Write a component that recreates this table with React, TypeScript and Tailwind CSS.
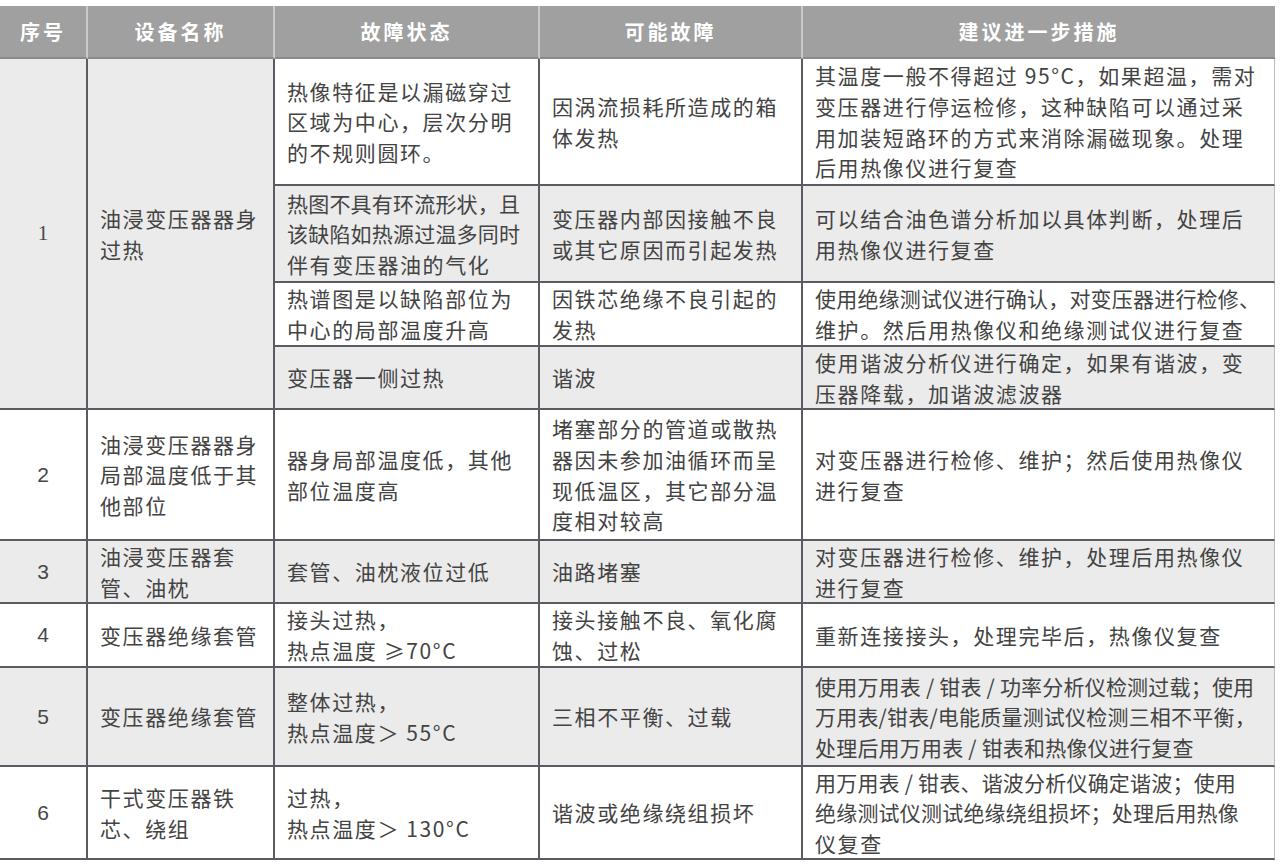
import React from "react";

type Cell = { lines: string[]; tight?: number[] };
type Row = { bg: string; cells: Cell[] };

const FONT = '"Noto Sans CJK SC", "Noto Sans", sans-serif';

const sub1: Row[] = [
  {
    bg: "bg-white",
    cells: [
      { lines: ["热像特征是以漏磁穿过", "区域为中心，层次分明", "的不规则圆环。"] },
      { lines: ["因涡流损耗所造成的箱", "体发热"] },
      {
        lines: [
          "其温度一般不得超过 95°C，如果超温，需对",
          "变压器进行停运检修，这种缺陷可以通过采",
          "用加装短路环的方式来消除漏磁现象。处理",
          "后用热像仪进行复查",
        ],
      },
    ],
  },
  {
    bg: "bg-[#ebebeb]",
    cells: [
      { lines: ["热图不具有环流形状，且", "该缺陷如热源过温多同时", "伴有变压器油的气化"], tight: [0, 1] },
      { lines: ["变压器内部因接触不良", "或其它原因而引起发热"] },
      { lines: ["可以结合油色谱分析加以具体判断，处理后", "用热像仪进行复查"] },
    ],
  },
  {
    bg: "bg-white",
    cells: [
      { lines: ["热谱图是以缺陷部位为", "中心的局部温度升高"] },
      { lines: ["因铁芯绝缘不良引起的", "发热"] },
      { lines: ["使用绝缘测试仪进行确认，对变压器进行检修、", "维护。然后用热像仪和绝缘测试仪进行复查"], tight: [0] },
    ],
  },
  {
    bg: "bg-[#ebebeb]",
    cells: [
      { lines: ["变压器一侧过热"] },
      { lines: ["谐波"] },
      { lines: ["使用谐波分析仪进行确定，如果有谐波，变", "压器降载，加谐波滤波器"] },
    ],
  },
];

const rows: { num: string; bg: string; cells: Cell[] }[] = [
  {
    num: "2",
    bg: "bg-white",
    cells: [
      { lines: ["油浸变压器器身", "局部温度低于其", "他部位"] },
      { lines: ["器身局部温度低，其他", "部位温度高"] },
      { lines: ["堵塞部分的管道或散热", "器因未参加油循环而呈", "现低温区，其它部分温", "度相对较高"] },
      { lines: ["对变压器进行检修、维护；然后使用热像仪", "进行复查"] },
    ],
  },
  {
    num: "3",
    bg: "bg-[#ebebeb]",
    cells: [
      { lines: ["油浸变压器套", "管、油枕"] },
      { lines: ["套管、油枕液位过低"] },
      { lines: ["油路堵塞"] },
      { lines: ["对变压器进行检修、维护，处理后用热像仪", "进行复查"] },
    ],
  },
  {
    num: "4",
    bg: "bg-white",
    cells: [
      { lines: ["变压器绝缘套管"] },
      { lines: ["接头过热，", "热点温度 ≥70°C"] },
      { lines: ["接头接触不良、氧化腐", "蚀、过松"] },
      { lines: ["重新连接接头，处理完毕后，热像仪复查"] },
    ],
  },
  {
    num: "5",
    bg: "bg-[#ebebeb]",
    cells: [
      { lines: ["变压器绝缘套管"] },
      { lines: ["整体过热，", "热点温度＞ 55°C"] },
      { lines: ["三相不平衡、过载"] },
      {
        lines: [
          "使用万用表 / 钳表 / 功率分析仪检测过载；使用",
          "万用表/钳表/电能质量测试仪检测三相不平衡，",
          "处理后用万用表 / 钳表和热像仪进行复查",
        ],
        tight: [0, 1, 2],
      },
    ],
  },
  {
    num: "6",
    bg: "bg-white",
    cells: [
      { lines: ["干式变压器铁", "芯、绕组"] },
      { lines: ["过热，", "热点温度＞ 130°C"] },
      { lines: ["谐波或绝缘绕组损坏"] },
      {
        lines: ["用万用表 / 钳表、谐波分析仪确定谐波；使用", "绝缘测试仪测试绝缘绕组损坏；处理后用热像", "仪复查"],
        tight: [0, 1],
      },
    ],
  },
];

function Text({ cell }: { cell: Cell }) {
  return (
    <div className="flex flex-col text-[21px] leading-[30.6px] text-[#434343] whitespace-nowrap">
      {cell.lines.map((l, i) => (
        <span
          key={i}
          className={cell.tight && cell.tight.includes(i) ? "tracking-[0.2px]" : "tracking-[1.6px]"}
        >
          {l}
        </span>
      ))}
    </div>
  );
}

function BodyCell({ cell, bg, last }: { cell: Cell; bg: string; last?: boolean }) {
  return (
    <div
      className={`${bg} flex items-center overflow-hidden pl-[12px] border-b-2 border-[#5e5a64] ${
        last ? "border-r border-r-[#bdbdbd]" : "border-r-2"
      }`}
    >
      <Text cell={cell} />
    </div>
  );
}

function NumCell({ num, bg, rowSpan }: { num: string; bg: string; rowSpan?: boolean }) {
  return (
    <div
      className={`${bg} ${rowSpan ? "row-span-4" : ""} flex items-center justify-center border-r-2 border-b-2 border-[#5e5a64] text-[21px] text-[#474747]`}
      style={{ fontFamily: num === "1" ? '"Liberation Serif", serif' : '"Liberation Sans", sans-serif' }}
    >
      {num}
    </div>
  );
}

export default function App() {
  const headers = ["序号", "设备名称", "故障状态", "可能故障", "建议进一步措施"];
  return (
    <div className="w-[1280px] h-[864px] bg-white pt-[6px] overflow-hidden" style={{ fontFamily: FONT }}>
      <div className="grid w-[1275px] grid-cols-[88px_187px_265px_263px_472px] grid-rows-[53px_127px_97px_64px_63px_131px_63px_64px_99px_93px]">
        {headers.map((h, i) => (
          <div
            key={h}
            className={`bg-[#a0a0a0] flex items-center justify-center text-white font-bold text-[20px] tracking-[3px] ${
              i < 4 ? "border-r-2 border-[#c9c9c9]" : ""
            } border-b-2 border-b-[#8a8a8a]`}
          >
            {h}
          </div>
        ))}

        <NumCell num="1" bg="bg-[#ebebeb]" rowSpan />
        <div className="row-span-4 bg-[#ebebeb] flex items-center pl-[12px] border-r-2 border-b-2 border-[#5e5a64]">
          <Text cell={{ lines: ["油浸变压器器身", "过热"] }} />
        </div>
        {sub1.map((r, ri) =>
          r.cells.map((c, ci) => <BodyCell key={`s${ri}-${ci}`} cell={c} bg={r.bg} last={ci === 2} />)
        )}

        {rows.map((r) => (
          <React.Fragment key={r.num}>
            <NumCell num={r.num} bg={r.bg} />
            {r.cells.map((c, ci) => (
              <BodyCell key={ci} cell={c} bg={r.bg} last={ci === 3} />
            ))}
          </React.Fragment>
        ))}
      </div>
    </div>
  );
}
